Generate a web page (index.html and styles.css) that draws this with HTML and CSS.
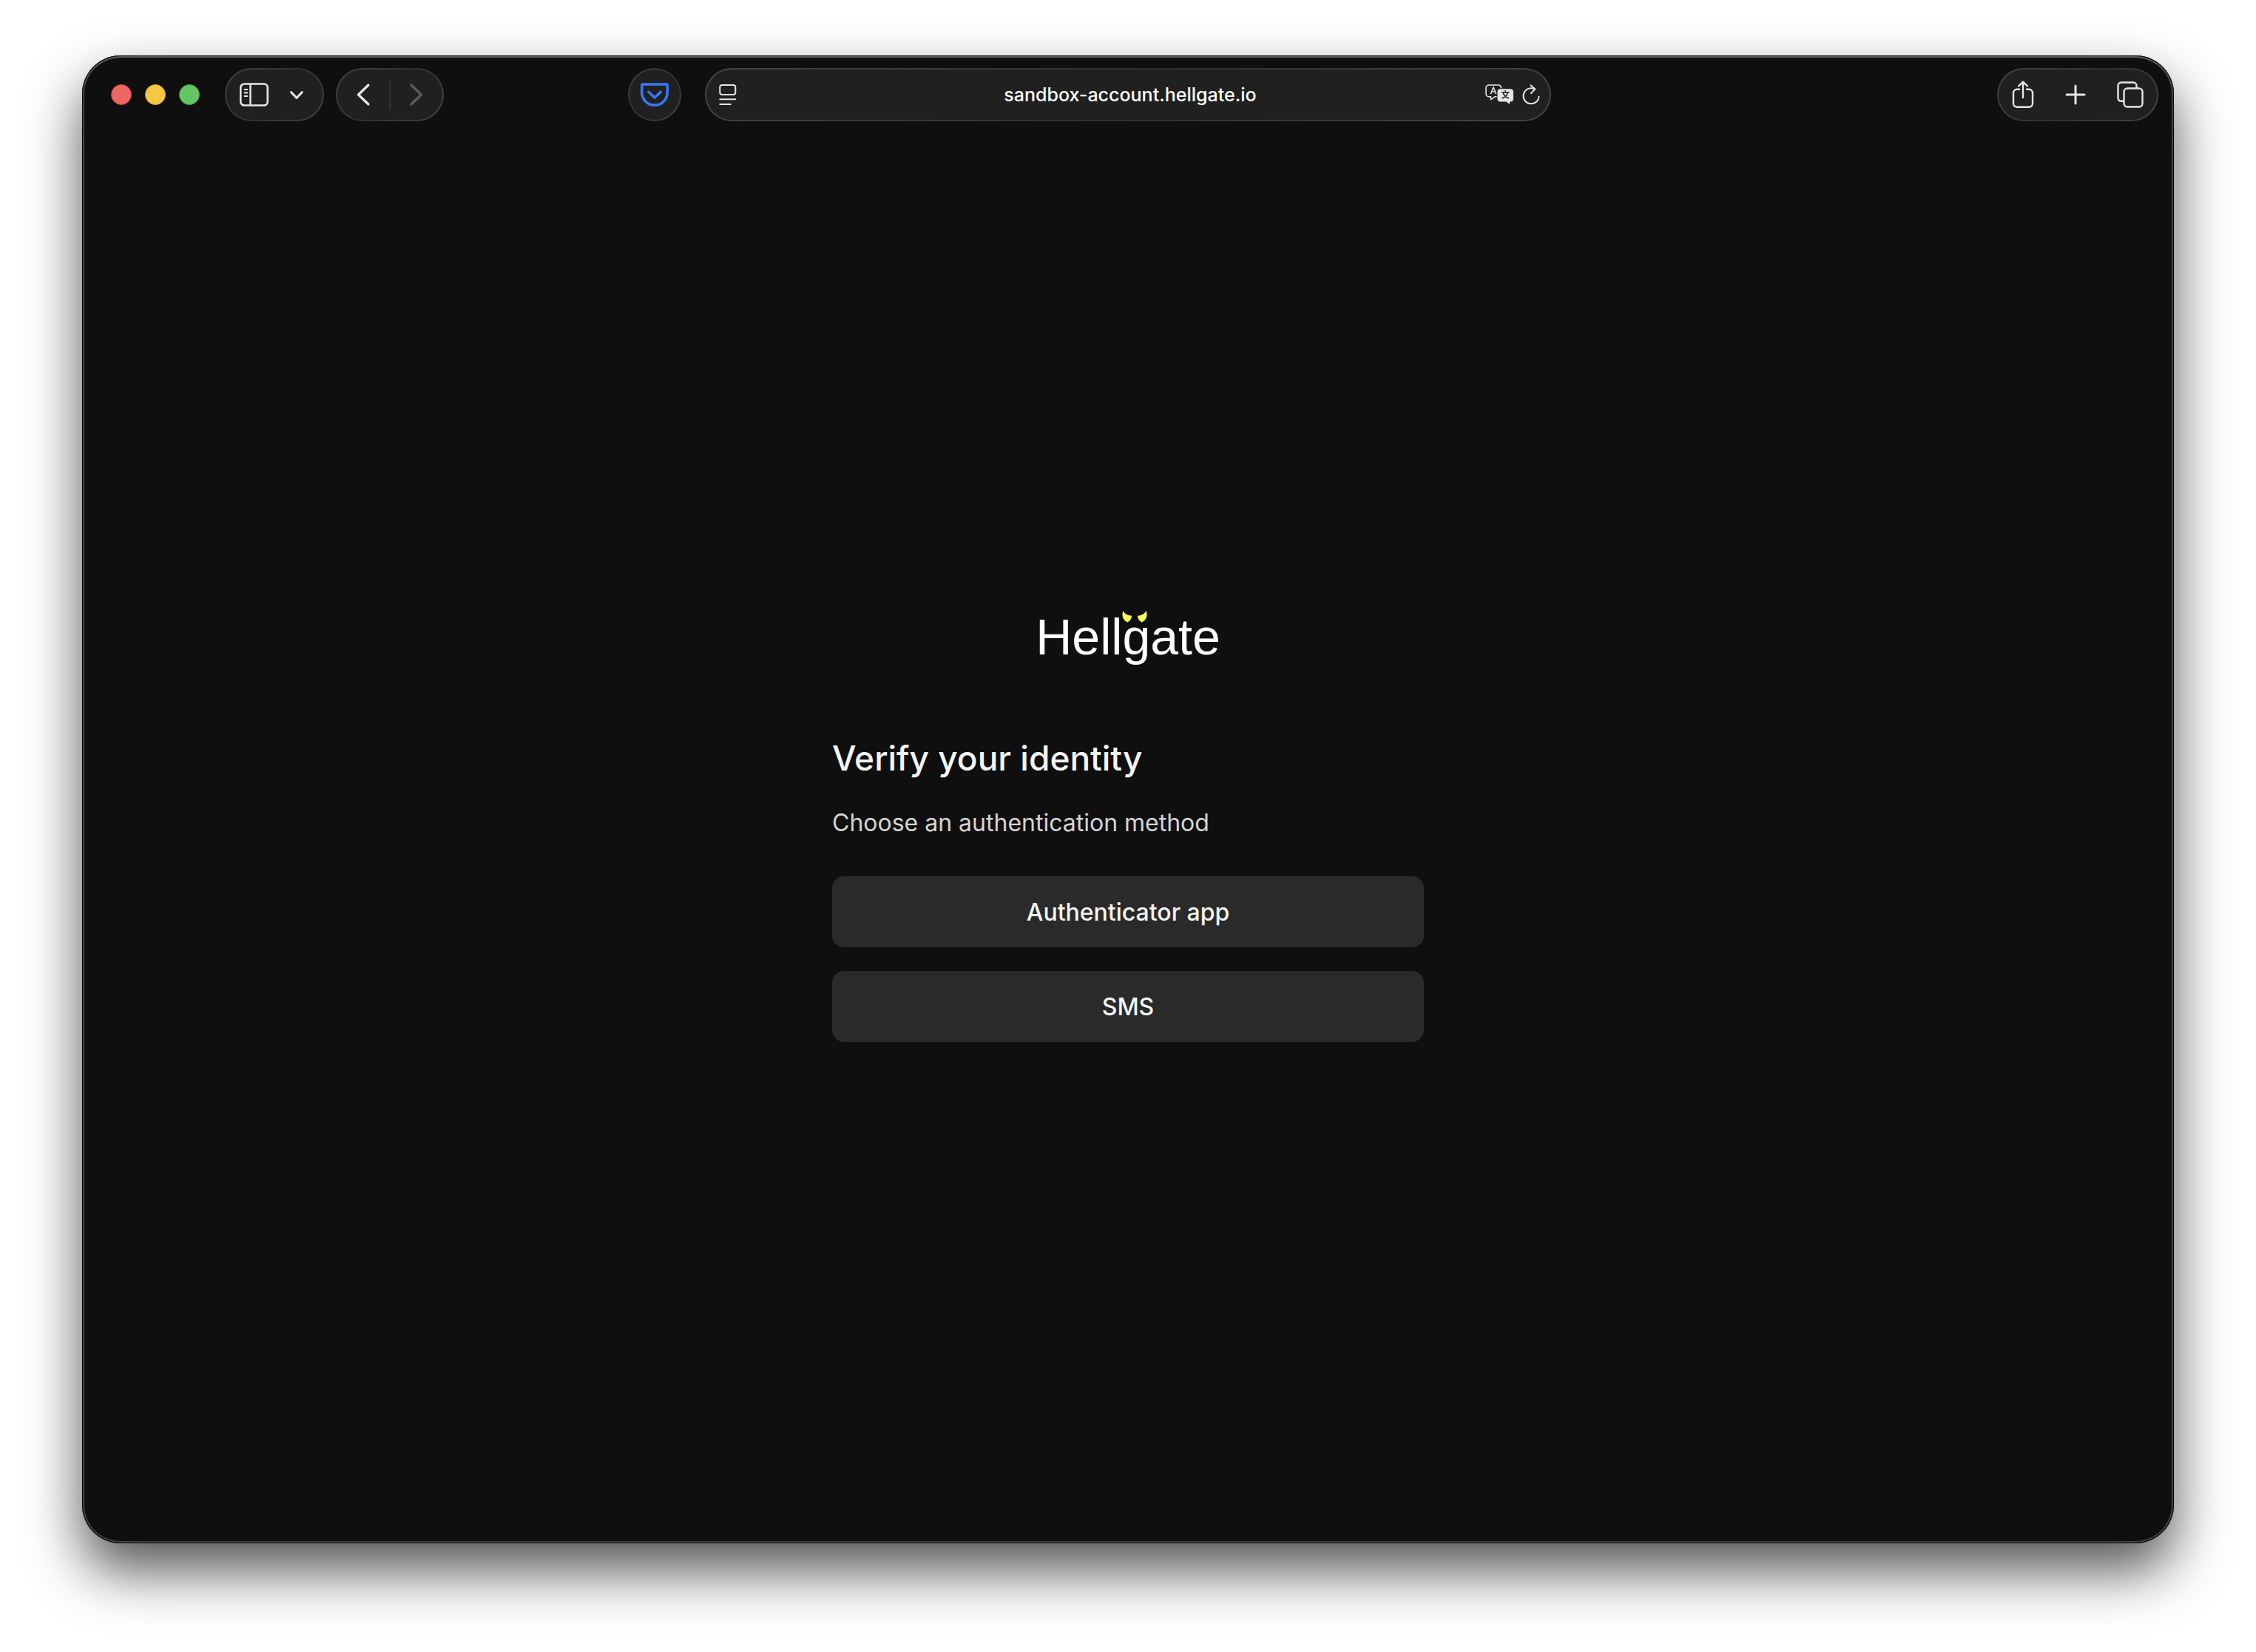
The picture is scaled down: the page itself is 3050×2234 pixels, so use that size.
FILE: index.html
```html
<!DOCTYPE html>
<html lang="en">
<head>
  <meta charset="utf-8">
  <meta name="viewport" content="width=device-width, initial-scale=1">
  <title>Verify your identity</title>
  <link rel="stylesheet" href="styles.css">
</head>
<body class="desktop">
  <div class="window">
    <header class="toolbar">
      <div class="toolbar-start">
        <div class="lights">
          <button class="light light-close" aria-label="Close"></button>
          <button class="light light-minimize" aria-label="Minimize"></button>
          <button class="light light-zoom" aria-label="Zoom"></button>
        </div>
        <div class="pill pill-sidebar">
          <button class="tool" aria-label="Show sidebar">
            <svg width="40" height="32" viewBox="0 0 40 32" fill="none" stroke="currentColor" stroke-linecap="round">
              <rect x="1.300" y="1.500" width="36.500" height="29" rx="5" stroke-width="2.600"/>
              <path d="M14.500 2v28" stroke-width="2.400"/>
              <path d="M6.500 9h4M6.500 13.500h4M6.500 18h4" stroke-width="1.800"/>
            </svg>
          </button>
          <button class="tool" aria-label="Tab groups">
            <svg width="20" height="32" viewBox="0 0 20 32" fill="none" stroke="currentColor" stroke-width="3" stroke-linecap="round" stroke-linejoin="round">
              <path d="M2.500 12.500l7.500 8 7.500-8"/>
            </svg>
          </button>
        </div>
        <div class="pill pill-history">
          <button class="tool" aria-label="Back">
            <svg width="20" height="32" viewBox="0 0 20 32" fill="none" stroke="currentColor" stroke-width="3.200" stroke-linecap="round" stroke-linejoin="round">
              <path d="M16 3L2.500 16 16 29"/>
            </svg>
          </button>
          <span class="divider"></span>
          <button class="tool tool-off" aria-label="Forward" disabled>
            <svg width="20" height="32" viewBox="0 0 20 32" fill="none" stroke="currentColor" stroke-width="3.200" stroke-linecap="round" stroke-linejoin="round">
              <path d="M4 3l13.500 13L4 29"/>
            </svg>
          </button>
        </div>
        <button class="pill pocket" aria-label="Save to Pocket">
          <svg width="38" height="32" viewBox="0 0 38 32" fill="none" stroke="currentColor" stroke-width="3.600" stroke-linecap="round" stroke-linejoin="round">
            <path d="M3 2h32q1.200 0 1.200 1.200V13a17.200 17.200 0 0 1-34.400 0V3.200Q1.800 2 3 2z"/>
            <path d="M10.800 12.200l8.200 7.800 8.200-7.800"/>
          </svg>
        </button>
      </div>
      <div class="pill address">
        <button class="tool" aria-label="Page menu">
          <svg width="24" height="30" viewBox="0 0 24 30" fill="none" stroke="currentColor" stroke-width="2" stroke-linecap="round">
            <rect x="1.300" y="2" width="21" height="13" rx="3"/>
            <path d="M1.300 21.300h21M1.300 28h14.500"/>
          </svg>
        </button>
        <input class="url" type="text" aria-label="Address" value="sandbox-account.hellgate.io">
        <div class="address-tools">
          <button class="tool" aria-label="Translate">
            <svg width="40" height="28" viewBox="0 0 40 28" fill="none" stroke="currentColor" stroke-linecap="round" stroke-linejoin="round">
              <path d="M15 16.800h-2L7.500 20.700v-3.900H5a4 4 0 0 1-4-4V5a4 4 0 0 1 4-4h12.500a4 4 0 0 1 4 3.600" stroke-width="1.600"/>
              <path d="M7.500 12.800l3.500-9 3.500 9M8.700 9.900h4.600" stroke-width="1.500"/>
              <path d="M20.500 6.200h13.500a4 4 0 0 1 4 4v9.200a4 4 0 0 1-4 4h-1V27l-4.500-3.600h-8a4 4 0 0 1-4-4v-9.200a4 4 0 0 1 4-4z" fill="currentColor" stroke="none"/>
              <path d="M22.500 11h9.500M27.200 8.700V11M24.200 11.500c.8 3.300 3.500 5.900 7.200 7.200M30.300 11.500c-.8 3.300-3.500 5.900-7.200 7.200" stroke="#202020" stroke-width="1.500"/>
            </svg>
          </button>
          <button class="tool" aria-label="Reload">
            <svg width="24" height="30" viewBox="0 0 24 30" fill="none" stroke="currentColor" stroke-width="2" stroke-linecap="round" stroke-linejoin="round">
              <path d="M16.500 7.300a10.500 10.500 0 1 0 6 10.200"/>
              <path d="M11.500 2.300l5.800 5.200-5.300 5.600"/>
            </svg>
          </button>
        </div>
      </div>
      <div class="toolbar-end">
        <div class="pill pill-actions">
          <button class="tool" aria-label="Share">
            <svg width="30" height="38" viewBox="0 0 30 38" fill="none" stroke="currentColor" stroke-width="2.400" stroke-linecap="round" stroke-linejoin="round">
              <path d="M10 11.800H7A5 5 0 0 0 2 16.800v14a5 5 0 0 0 5 5h16a5 5 0 0 0 5-5v-14a5 5 0 0 0-5-5h-3"/>
              <path d="M15 23V2M9 7.500L15 1.700l6 5.800"/>
            </svg>
          </button>
          <button class="tool" aria-label="New tab">
            <svg width="28" height="28" viewBox="0 0 28 28" fill="none" stroke="currentColor" stroke-width="3" stroke-linecap="round">
              <path d="M14 2v24M2 14h24"/>
            </svg>
          </button>
          <button class="tool" aria-label="Tab overview">
            <svg width="36" height="36" viewBox="0 0 36 36" fill="none" stroke="currentColor" stroke-width="2.400" stroke-linecap="butt">
              <rect x="9.500" y="9.500" width="25" height="25" rx="4.500"/>
              <path d="M9 26.800H5.700a4.200 4.200 0 0 1-4.200-4.200V5.700a4.200 4.200 0 0 1 4.200-4.200h16.600a4.200 4.200 0 0 1 4.200 4.200V9"/>
            </svg>
          </button>
        </div>
      </div>
    </header>
    <main class="page">
      <div class="card">
        <div class="logo">
          <span>Hellgate</span>
          <svg class="horns" width="34" height="16" viewBox="0 0 34 16" fill="#ffff5c">
            <path d="M1.600 0C3 3.600 7 6.300 13 6.700C13 10 11 13.500 7.500 15.500C1.500 13.500-1.200 6 1.600 0z"/>
            <path d="M32.400 0C31 3.600 27 6.300 21 6.700C21 10 23 13.500 26.500 15.500C32.500 13.500 35.200 6 32.400 0z"/>
          </svg>
        </div>
        <h1 class="title">Verify your identity</h1>
        <p class="hint">Choose an authentication method</p>
        <div class="methods">
          <button class="method">Authenticator app</button>
          <button class="method">SMS</button>
        </div>
      </div>
    </main>
  </div>
</body>
</html>
```

FILE: styles.css
```css
*,
*::before,
*::after {
  box-sizing: border-box;
}

.desktop {
  display: flex;
  min-height: 100vh;
  margin: 0;
  padding: 75px 111px 147px;
  background: #fff;
  font-family: Inter, "Liberation Sans", sans-serif;
}

button,
input {
  margin: 0;
  padding: 0;
  border: 0;
  background: none;
  color: inherit;
  font: inherit;
}

svg {
  display: block;
}

.window {
  display: flex;
  flex: 1;
  flex-direction: column;
  min-width: 0;
  padding: 3px;
  border-radius: 52px;
  background: #0f0f0f;
  box-shadow:
    inset 0 0 0 1px #000,
    inset 0 2px 0 1px #5c5c5c,
    inset 0 0 0 3px #444,
    0 37px 75px rgba(0, 0, 0, 0.67);
}

/* Browser toolbar */

.toolbar {
  display: grid;
  grid-template-columns: minmax(0, 1fr) minmax(0, 1144px) minmax(0, 1fr);
  padding: 14px 0;
  color: #e6e6e6;
}

.toolbar-start,
.toolbar-end {
  display: flex;
  align-items: center;
}

.toolbar-start {
  gap: 16px;
  padding: 0 32px 0 36px;
}

.toolbar-end {
  justify-content: flex-end;
  padding-right: 18px;
}

.lights {
  display: flex;
  gap: 18px;
  margin-right: 18px;
}

.light {
  width: 28px;
  height: 28px;
  border: 1px solid;
  border-radius: 50%;
}

.light-close {
  border-color: #d9403f;
  background: #ee6767;
}

.light-minimize {
  border-color: #dba520;
  background: #f4c843;
}

.light-zoom {
  border-color: #37a83a;
  background: #65c466;
}

.pill {
  display: flex;
  align-items: center;
  height: 72px;
  border: 2px solid transparent;
  border-radius: 36px;
  background:
    linear-gradient(#202020, #202020) padding-box,
    linear-gradient(135deg, #444, #303030 50%, #444) border-box;
}

.tool-off {
  color: #5c5c5c;
}

.pill-sidebar {
  justify-content: space-between;
  width: 134px;
  padding: 0 25px 0 18px;
}

.pill-history {
  justify-content: space-between;
  width: 146px;
  padding: 0 26px;
}

.divider {
  width: 2px;
  height: 40px;
  background: #333;
}

.pocket {
  justify-content: center;
  width: 72px;
  margin-left: auto;
  color: #3478f6;
}

.address {
  gap: 16px;
  padding: 0 13px 0 17px;
}

.url {
  flex: 1;
  min-width: 0;
  padding-left: 52px;
  outline: 0;
  color: #fff;
  font-size: 25px;
  font-weight: 500;
  line-height: 34px;
  text-align: center;
}

.address-tools {
  display: flex;
  align-items: center;
  gap: 10px;
}

.pill-actions {
  justify-content: space-between;
  width: 218px;
  padding: 0 18px;
}

/* Sign-in page */

.page {
  display: flex;
  flex: 1;
  align-items: center;
  justify-content: center;
  padding: 0 32px 32px;
  color: #f5f5f5;
}

.card {
  display: flex;
  flex-direction: column;
  width: 100%;
  max-width: 800px;
}

.logo {
  position: relative;
  align-self: center;
  margin-bottom: 96px;
  color: #fff;
  font-family: "Liberation Sans", Arial, sans-serif;
  font-size: 68px;
  line-height: 80px;
}

.horns {
  position: absolute;
  top: 5px;
  left: 117px;
}

.title {
  margin: 0 0 40px;
  font-size: 46px;
  font-weight: 500;
  line-height: 56px;
}

.hint {
  margin: 0 0 52px;
  color: #d4d4d4;
  font-size: 32px;
  line-height: 40px;
}

.methods {
  display: flex;
  flex-direction: column;
  gap: 32px;
}

.method {
  height: 96px;
  border-radius: 16px;
  background: #2a2a2a;
  font-size: 32px;
  font-weight: 500;
}
```
